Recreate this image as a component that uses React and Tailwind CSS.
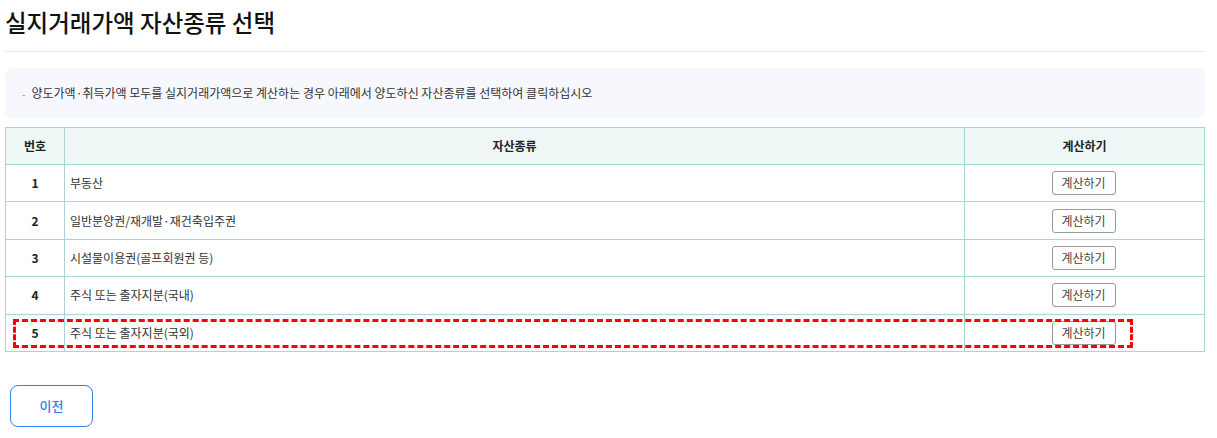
import React from "react";

const rows = [
  "부동산",
  "일반분양권/재개발·재건축입주권",
  "시설물이용권(골프회원권 등)",
  "주식 또는 출자지분(국내)",
  "주식 또는 출자지분(국외)",
];

export default function App() {
  return (
    <div
      className="bg-white text-[#222] pl-[5px] pr-[12px]"
      style={{ fontFamily: '"Noto Sans CJK KR", "Noto Sans", sans-serif' }}
    >
      <h1 className="text-[23.5px] leading-[30px] font-medium text-[#111] pt-[7px] pb-[14px] border-b border-[#e5e5e5]">
        실지거래가액 자산종류 선택
      </h1>
      <div className="mt-[16px] h-[50px] rounded-[8px] bg-[#f7f8fd] flex items-center pl-[17px] text-[12px] text-[#333]">
        <span className="text-[#888] mr-[6px] text-[10px]">-</span>
        양도가액·취득가액 모두를 실지거래가액으로 계산하는 경우 아래에서 양도하신 자산종류를 선택하여 클릭하십시오
      </div>
      <div className="relative mt-[9px]">
        <table className="w-full border-collapse text-[12px] text-[#333]">
          <thead>
            <tr className="bg-[#eef7f6] h-[37px]">
              <th className="w-[59px] border border-[#a9d3d5] font-bold text-[#222]">번호</th>
              <th className="border border-[#a9d3d5] font-bold text-[#222]">자산종류</th>
              <th className="w-[240px] border border-[#a9d3d5] font-bold text-[#222]">계산하기</th>
            </tr>
          </thead>
          <tbody>
            {rows.map((r, i) => (
              <tr key={i} className="h-[37.4px]">
                <td className="border border-[#a9d3d5] text-center font-bold text-[#222]">{i + 1}</td>
                <td className="border border-[#a9d3d5] pl-[5px]">{r}</td>
                <td className="border border-[#a9d3d5] text-center">
                  <button className="w-[64px] h-[24px] border border-[#999] rounded-[3px] bg-white text-[12px] text-[#444] ml-[-2px]">
                    계산하기
                  </button>
                </td>
              </tr>
            ))}
          </tbody>
        </table>
        <div className="absolute left-[8px] top-[192px] w-[1120px] h-[29px] border-[3px] border-dashed border-[#ff0000] pointer-events-none" />
      </div>
      <button className="mt-[33px] ml-[5px] w-[83px] h-[42px] rounded-[8px] border-[1.5px] border-[#2f7ef0] text-[#2f7ef0] text-[13px] font-medium bg-white">
        이전
      </button>
    </div>
  );
}
